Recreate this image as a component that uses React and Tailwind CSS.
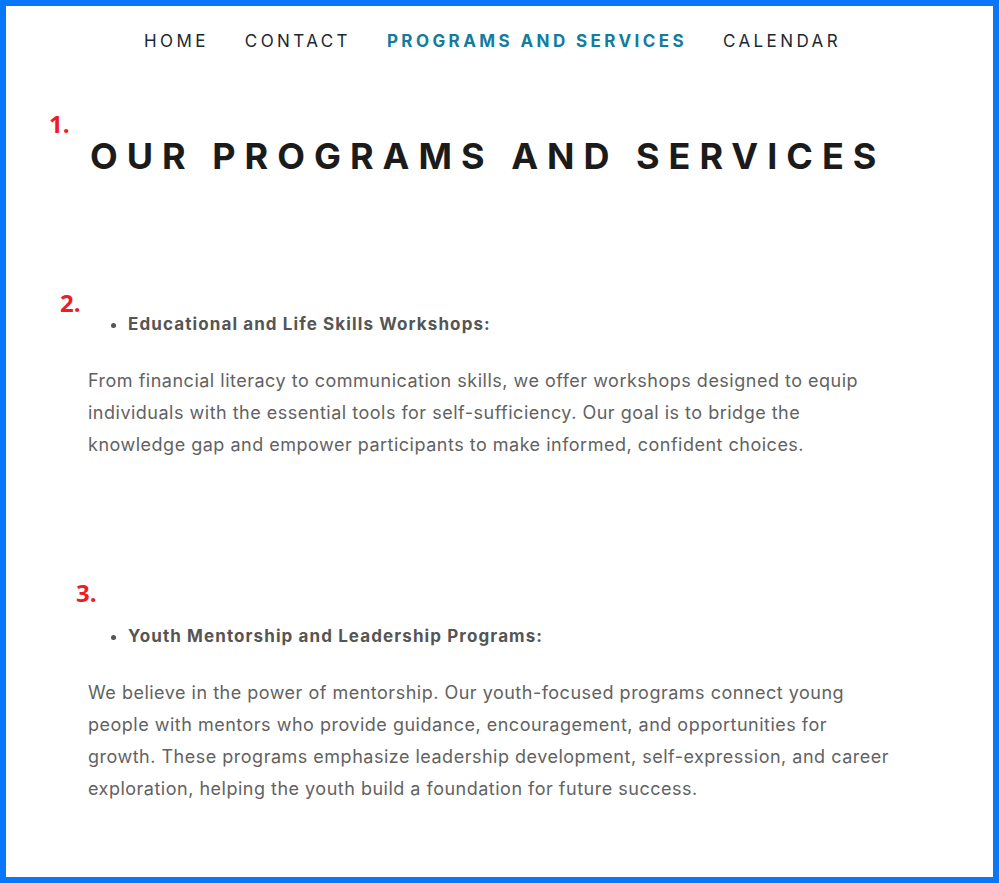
import React from "react";

const navItems = [
  { label: "HOME", active: false },
  { label: "CONTACT", active: false },
  { label: "PROGRAMS AND SERVICES", active: true },
  { label: "CALENDAR", active: false },
];

const Marker = ({ children, className }) => (
  <p
    className={`font-['Open_Sans',sans-serif] text-[24px] font-bold leading-[18px] text-[#ee1c25] ${className}`}
  >
    {children}
  </p>
);

const Program = ({ title, lines }) => (
  <>
    <ul className="list-disc pl-[40px] text-[#555555] marker:text-[#555555]">
      <li className="text-[17px] font-bold leading-[24px] tracking-[1.1px]">{title}</li>
    </ul>
    <p className="mt-[29px] text-[18px] leading-[32px] tracking-[0.5px] text-[#626262]">
      {lines.map((line, i) => (
        <span key={i} className="block whitespace-nowrap">
          {line}
        </span>
      ))}
    </p>
  </>
);

export default function App() {
  return (
    <div className="w-[999px] h-[883px] border-[6px] border-[#0a76fa] bg-white font-['Inter',sans-serif] overflow-hidden">
      {/* top nav */}
      <nav className="flex justify-center gap-[36px] pt-[26px] pr-[14px] text-[17px] leading-[18px] tracking-[0.2em]">
        {navItems.map((item) => (
          <a
            key={item.label}
            className={
              item.active
                ? "font-bold text-[#137c9d]"
                : "font-normal text-[#1d2730]"
            }
          >
            {item.label}
          </a>
        ))}
      </nav>

      <Marker className="mt-[65px] ml-[43px]">1.</Marker>
      <h1 className="mt-[5px] pl-[84px] text-[36px] font-bold leading-none tracking-[0.25em] text-[#1b1b1b]">
        OUR PROGRAMS AND SERVICES
      </h1>

      <Marker className="mt-[120px] ml-[54px]">2.</Marker>
      <div className="px-[82px]">
        <Program
          title="Educational and Life Skills Workshops:"
          lines={[
            "From financial literacy to communication skills, we offer workshops designed to equip",
            "individuals with the essential tools for self-sufficiency. Our goal is to bridge the",
            "knowledge gap and empower participants to make informed, confident choices.",
          ]}
        />
      </div>

      <Marker className="mt-[123px] ml-[70px]">3.</Marker>
      <div className="px-[82px] mt-[22px]">
        <Program
          title="Youth Mentorship and Leadership Programs:"
          lines={[
            "We believe in the power of mentorship. Our youth-focused programs connect young",
            "people with mentors who provide guidance, encouragement, and opportunities for",
            "growth. These programs emphasize leadership development, self-expression, and career",
            "exploration, helping the youth build a foundation for future success.",
          ]}
        />
      </div>
    </div>
  );
}
